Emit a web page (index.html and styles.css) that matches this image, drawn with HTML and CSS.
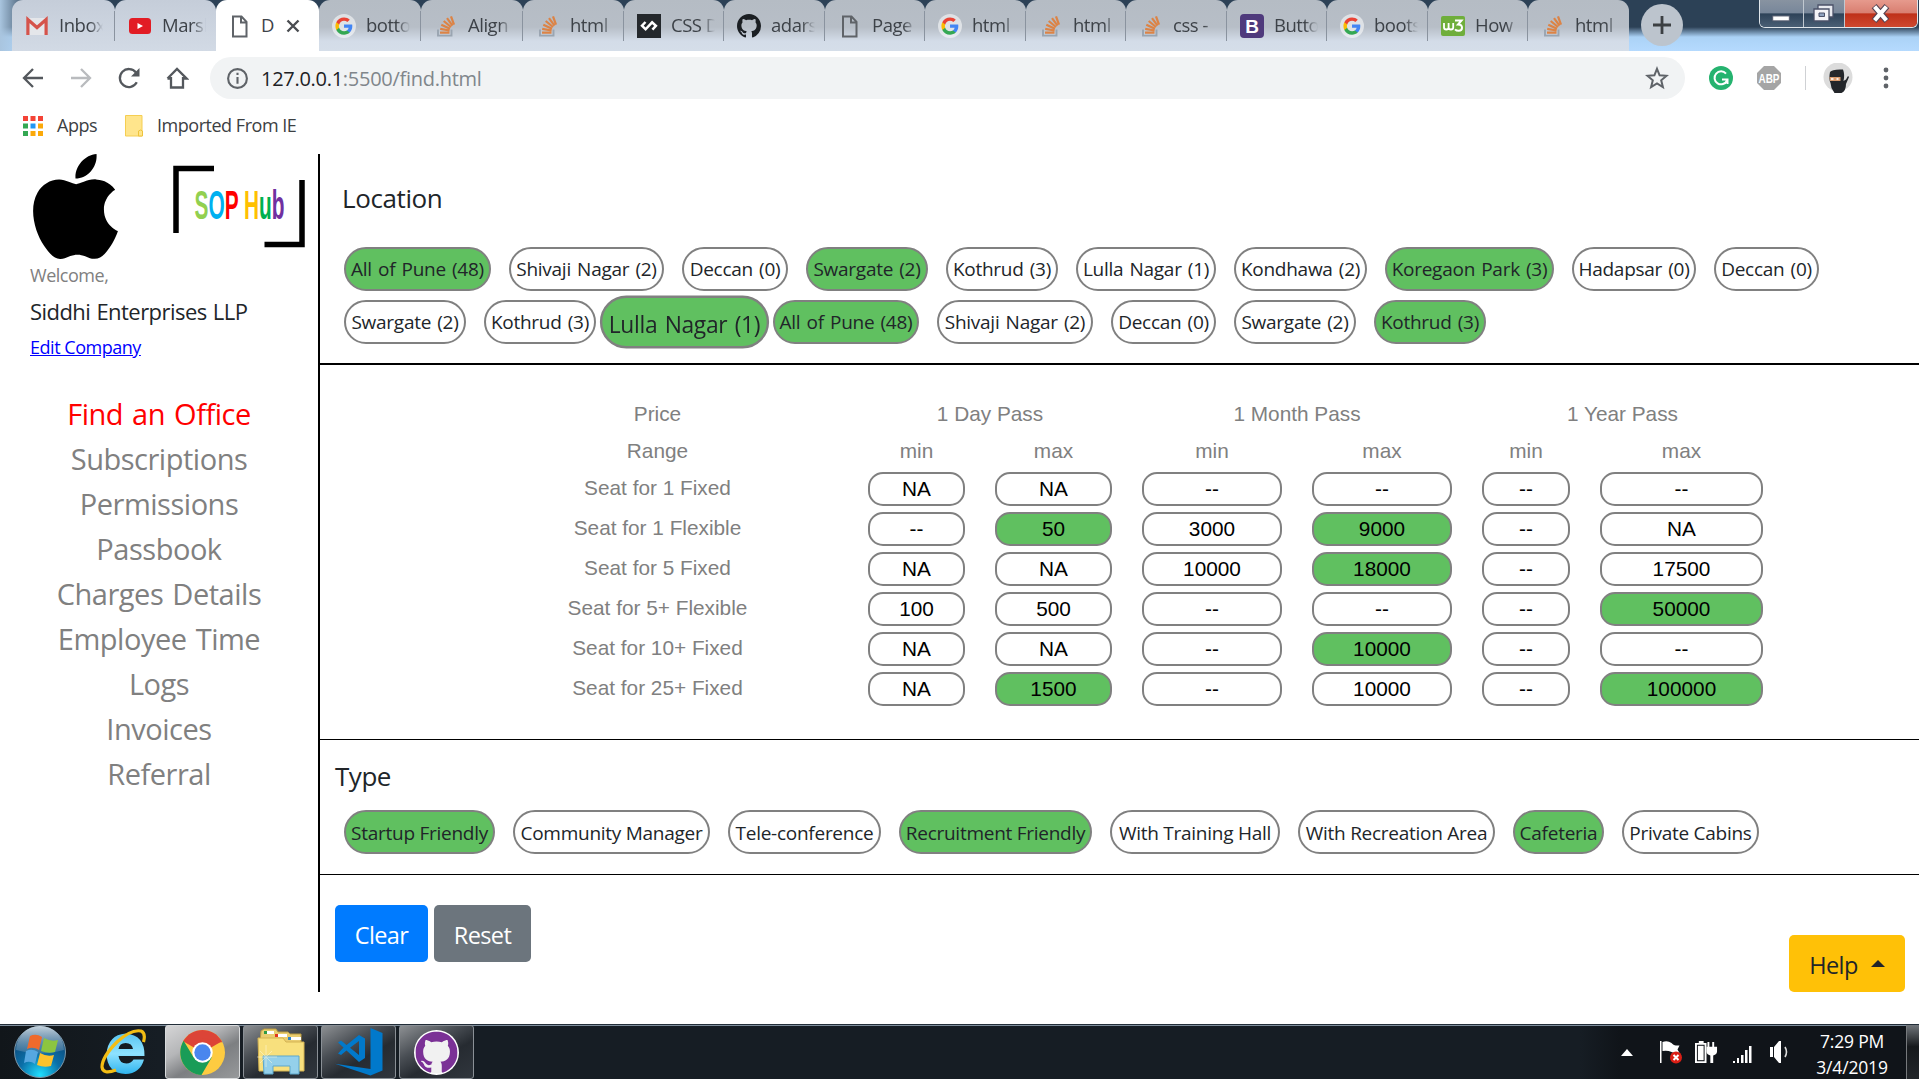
FILE: index.html
```html
<!DOCTYPE html>
<html lang="en">
<head>
<meta charset="utf-8">
<title>Document</title>
<link rel="stylesheet" href="styles.css">
</head>
<body>
<svg class="defs" aria-hidden="true">
  <symbol id="google" viewBox="0 0 24 24">
    <circle cx="12" cy="12" r="12" fill="#fff" opacity=".55"/>
    <g transform="translate(2.6 2.6) scale(.785)">
      <path fill="#4285f4" d="M22.56 12.25c0-.78-.07-1.53-.2-2.25H12v4.26h5.92c-.26 1.37-1.04 2.53-2.21 3.31v2.77h3.57c2.08-1.92 3.28-4.74 3.28-8.09z"/>
      <path fill="#34a853" d="M12 23c2.97 0 5.46-.98 7.28-2.66l-3.57-2.77c-.98.66-2.23 1.06-3.71 1.06-2.86 0-5.29-1.93-6.16-4.53H2.18v2.84C3.99 20.53 7.7 23 12 23z"/>
      <path fill="#fbbc05" d="M5.84 14.09c-.22-.66-.35-1.36-.35-2.09s.13-1.43.35-2.09V7.07H2.18C1.43 8.55 1 10.22 1 12s.43 3.45 1.18 4.93l3.66-2.84z"/>
      <path fill="#ea4335" d="M12 5.38c1.62 0 3.06.56 4.21 1.64l3.15-3.15C17.45 2.09 14.97 1 12 1 7.7 1 3.99 3.47 2.18 7.07l3.66 2.84c.87-2.6 3.3-4.53 6.16-4.53z"/>
    </g>
  </symbol>
  <symbol id="stack" viewBox="0 0 24 24">
    <path d="M4 15.500v6.100h13.500v-6.100" fill="none" stroke="#9aa5b1" stroke-width="1.900"/>
    <g stroke="#dc8345" stroke-width="2.200">
      <path d="M6 18.600h9.500M6.200 14.800l9.400 1.700M7.300 10.800l8.700 4M9.700 7l7.300 6M13 4.200l5.500 7.500M17 2.400l3 8.300"/>
    </g>
  </symbol>
  <symbol id="page" viewBox="0 0 24 24">
    <path d="M5 2.500h8.500l5 5.300v14.700H5zM13 3v5.500h5.500" fill="none" stroke="#5f6368" stroke-width="2"/>
  </symbol>
  <symbol id="octocat" viewBox="0 0 16 16">
    <path d="M8 0C3.58 0 0 3.58 0 8c0 3.54 2.29 6.53 5.47 7.59.4.07.55-.17.55-.38 0-.19-.01-.82-.01-1.49-2.01.37-2.53-.49-2.69-.94-.09-.23-.48-.94-.82-1.13-.28-.15-.68-.52-.01-.53.63-.01 1.08.58 1.23.82.72 1.21 1.87.87 2.33.66.07-.52.28-.87.51-1.07-1.78-.2-3.64-.89-3.64-3.95 0-.87.31-1.59.82-2.15-.08-.2-.36-1.02.08-2.12 0 0 .67-.21 2.2.82.64-.18 1.32-.27 2-.27.68 0 1.36.09 2 .27 1.53-1.04 2.2-.82 2.2-.82.44 1.1.16 1.92.08 2.12.51.56.82 1.27.82 2.15 0 3.07-1.87 3.75-3.65 3.95.29.25.54.73.54 1.48 0 1.07-.01 1.93-.01 2.2 0 .21.15.46.55.38A8.013 8.013 0 0016 8c0-4.42-3.58-8-8-8z"/>
  </symbol>
</svg>

<header class="tabs">
  <div class="tab light"><svg class="fav" viewBox="0 0 24 24"><path d="M2 4h20v17H2z" fill="#e4e6ea"/><path d="M2.900 21V5.500l9.100 8 9.100-8V21" fill="none" stroke="#d5534b" stroke-width="3.200"/></svg><span>Inbox</span></div>
  <div class="tab light flush"><svg class="fav" viewBox="0 0 24 24"><rect x="1" y="4" width="22" height="16" rx="3.500" fill="#e21c24"/><path d="M9.500 9v6l5.500-3z" fill="#fff"/></svg><span>Marsh</span></div>
  <div class="tab active"><svg class="fav"><use href="#page"/></svg><span>D</span><svg class="close" viewBox="0 0 14 14"><path d="M1.500 1.500l11 11M12.500 1.500l-11 11" stroke="#4a4d51" stroke-width="2.400"/></svg></div>
  <div class="tab"><svg class="fav"><use href="#google"/></svg><span>botto</span></div>
  <div class="tab"><svg class="fav"><use href="#stack"/></svg><span>Align</span></div>
  <div class="tab"><svg class="fav"><use href="#stack"/></svg><span>html</span></div>
  <div class="tab"><svg class="fav" viewBox="0 0 24 24"><path d="M0 0h24v24H0z" fill="#24282c"/><path d="M8.500 8L5 11.700l3.600 3.600 6.500-7 3.800 3.500-3.500 3.800" fill="none" stroke="#fff" stroke-width="2.500"/></svg><span>CSS D</span></div>
  <div class="tab"><svg class="fav" fill="#1b1f23"><use href="#octocat"/></svg><span>adars</span></div>
  <div class="tab"><svg class="fav"><use href="#page"/></svg><span>Page</span></div>
  <div class="tab"><svg class="fav"><use href="#google"/></svg><span>html</span></div>
  <div class="tab"><svg class="fav"><use href="#stack"/></svg><span>html</span></div>
  <div class="tab"><svg class="fav"><use href="#stack"/></svg><span>css -</span></div>
  <div class="tab"><svg class="fav" viewBox="0 0 24 24"><rect width="24" height="24" rx="4" fill="#4f3a7c"/><text x="12" y="19" text-anchor="middle" class="glyph" font-size="19" fill="#fff">B</text></svg><span>Butto</span></div>
  <div class="tab"><svg class="fav"><use href="#google"/></svg><span>boots</span></div>
  <div class="tab"><svg class="fav" viewBox="0 0 24 24"><rect y="2" width="24" height="20" rx="2" fill="#6fae3b"/><path d="M3 9v4.500q0 2 2.300 2t2.300-2V9v4.500q0 2 2.300 2t2.300-2V9" fill="none" stroke="#fff" stroke-width="1.800"/><path d="M14 6.500h6.500L17 10.500q4 0 4 3.300 0 3-3.200 3-2.500 0-3.800-1.500" fill="none" stroke="#fff" stroke-width="2"/></svg><span>How</span></div>
  <div class="tab flush"><svg class="fav"><use href="#stack"/></svg><span>html</span></div>
  <div class="newtab"><svg viewBox="0 0 42 42"><path d="M21 12v18M12 21h18" stroke="#3c4043" stroke-width="2.800"/></svg></div>
  <div class="winctl">
    <i><svg viewBox="0 0 44 28"><rect x="13" y="16" width="17" height="5" fill="#fff" stroke="#555b6e"/></svg></i>
    <i><svg viewBox="0 0 40 28"><path d="M14 5h15v12H14z" fill="#e8eaf0" stroke="#4b5168" stroke-width="1.300"/><path d="M10 9h15v12H10z" fill="#f4f4f8" stroke="#4b5168" stroke-width="1.300"/><path d="M15 13h5.500v3.500H15z" fill="#8fa2c0" stroke="#4b5168"/></svg></i>
    <i class="x"><svg viewBox="0 0 73 28"><path d="M29.500 6l13 15M42.500 6l-13 15" stroke="#564453" stroke-width="6.500"/><path d="M30 6.500l12 14M42 6.500l-12 14" stroke="#fff" stroke-width="4.200"/></svg></i>
  </div>
</header>

<div class="toolbar">
  <svg class="nav" viewBox="0 0 24 24"><path d="M22 12H3M12 3l-9 9 9 9" /></svg>
  <svg class="nav off" viewBox="0 0 24 24"><path d="M2 12h19M12 3l9 9-9 9"/></svg>
  <svg class="nav" viewBox="0 0 24 24"><path d="M19.800 16.300A9 9 0 1 1 19 6.500"/><path d="M22.500 2v8.500H14z" class="solid"/></svg>
  <svg class="nav" viewBox="0 0 24 24"><path d="M6 11v10.500h12V11M2.500 12.500L12 3l9.500 9.500H18M2.500 12.500H6"/></svg>
  <div class="omnibox">
    <svg class="info" viewBox="0 0 24 24"><circle cx="12" cy="12" r="9.800"/><path d="M12 10.500v7M12 6v2.400"/></svg>
    <span class="url">127.0.0.1<em>:5500/find.html</em></span>
    <svg class="star" viewBox="0 0 24 24"><path d="M12 2.800l2.600 6.500 7 .5-5.400 4.500 1.700 6.800-5.900-3.700-5.900 3.700 1.700-6.800-5.400-4.500 7-.5z"/></svg>
  </div>
  <svg class="ext" viewBox="0 0 24 24"><circle cx="12" cy="12" r="12" fill="#25b36f"/><path d="M17 7.600A6.500 6.500 0 1 0 18 14.500M13 13.500h5.500v4.500" fill="none" stroke="#fff" stroke-width="2"/></svg>
  <svg class="ext abp" viewBox="0 0 24 24"><path d="M7 0h10l7 7v10l-7 7H7l-7-7V7z" fill="#a5a5a5"/><text x="12" y="16.500" text-anchor="middle" class="glyph" font-size="12.500" fill="#fff" textLength="21" lengthAdjust="spacingAndGlyphs">ABP</text></svg>
  <i class="rule"></i>
  <svg class="avatar" viewBox="0 0 30 30"><circle cx="15" cy="14" r="14.500" fill="#dcdcdc"/><path d="M7 9q2-3 13-2.500 2 5 .5 11.500l2.500-1.500 2-3.500 1 1-3 7q0 7-4.500 9h-7l-3-5-1-5q-2-4-.5-11z" fill="#23262a"/><path d="M6.500 14h11v4H7z" fill="#d99b6e"/><path d="M8 16h2.500M13.500 16h2" stroke="#fff" stroke-width="1.500"/></svg>
  <svg class="dots" viewBox="0 0 6 24"><circle cx="3" cy="4" r="2.400"/><circle cx="3" cy="12" r="2.400"/><circle cx="3" cy="20" r="2.400"/></svg>
</div>

<div class="bookmarks">
  <svg class="apps" viewBox="0 0 20 20"><path fill="#f44336" d="M0 0h5v5H0zM7.500 0h5v5h-5zM15 0h5v5h-5z"/><path fill="#34a853" d="M0 7.500h5v5H0zM0 15h5v5H0z"/><path fill="#2196f3" d="M7.500 7.500h5v5h-5z"/><path fill="#fba90a" d="M15 7.500h5v5h-5zM15 15h5v5h-5zM7.500 15h5v5h-5z"/></svg>
  <span class="bm-apps">Apps</span>
  <svg class="folder" viewBox="0 0 18 22"><path d="M.5.500h16.500V21H.500z" fill="#ffe58c" stroke="#f5ce52"/><path d="M13.500 21v-5q2-2 4 0v5z" fill="#ffe58c" stroke="#eec33c"/></svg>
  <span class="bm-ie">Imported From IE</span>
</div>

<div class="app">
  <aside class="sidebar">
    <div class="logos">
      <svg class="apple" viewBox="2.200 0 19.600 24" preserveAspectRatio="none"><path d="M12.152 6.896c-.948 0-2.415-1.078-3.960-1.040-2.040.027-3.910 1.183-4.961 3.014-2.117 3.675-.546 9.103 1.519 12.090 1.013 1.454 2.208 3.090 3.792 3.039 1.520-.065 2.090-.987 3.935-.987 1.831 0 2.350.987 3.960.948 1.637-.026 2.676-1.480 3.676-2.948 1.156-1.688 1.636-3.325 1.662-3.415-.039-.013-3.182-1.221-3.220-4.857-.026-3.040 2.480-4.494 2.597-4.559-1.429-2.090-3.623-2.324-4.390-2.376-2-.156-3.675 1.090-4.610 1.090zM16.850 0C17.100 2.900 14.900 5.600 12 5.600 11.800 2.900 14.100.200 16.850 0z"/></svg>
      <svg class="sop" viewBox="0 0 132 83"><path d="M41 3.500H3v64.500M129 15v64.500H91.500" fill="none" stroke="#000" stroke-width="5.500"/>
        <text class="glyph" font-size="40" x="21.500" y="54" textLength="90" lengthAdjust="spacingAndGlyphs"><tspan fill="#92d050">S</tspan><tspan fill="#00b0f0">O</tspan><tspan fill="#f00">P</tspan> <tspan fill="#ffc000">H</tspan><tspan fill="#00b050">u</tspan><tspan fill="#7030a0">b</tspan></text></svg>
    </div>
    <div class="welcome">Welcome,</div>
    <div class="company">Siddhi Enterprises LLP</div>
    <a class="edit">Edit Company</a>
    <nav class="menu">
      <a class="current">Find an Office</a><a>Subscriptions</a><a>Permissions</a><a>Passbook</a><a>Charges Details</a><a>Employee Time</a><a>Logs</a><a>Invoices</a><a>Referral</a>
    </nav>
  </aside>
  <main class="main">
    <section class="location">
      <h2>Location</h2>
      <div class="pills loc-a"><span class="pill on">All of Pune (48)</span><span class="pill">Shivaji Nagar (2)</span><span class="pill">Deccan (0)</span><span class="pill on">Swargate (2)</span><span class="pill">Kothrud (3)</span><span class="pill">Lulla Nagar (1)</span><span class="pill">Kondhawa (2)</span><span class="pill on">Koregaon Park (3)</span><span class="pill">Hadapsar (0)</span><span class="pill">Deccan (0)</span></div>
      <div class="pills loc-b"><span class="pill">Swargate (2)</span><span class="pill">Kothrud (3)</span><span class="pill on hover">Lulla Nagar (1)</span><span class="pill on">All of Pune (48)</span><span class="pill">Shivaji Nagar (2)</span><span class="pill">Deccan (0)</span><span class="pill">Swargate (2)</span><span class="pill on">Kothrud (3)</span></div>
    </section>
    <section class="prices">
      <div class="grid">
        <b>Price</b><b class="two">1 Day Pass</b><b class="two">1 Month Pass</b><b class="two">1 Year Pass</b>
        <b>Range</b><b>min</b><b>max</b><b>min</b><b>max</b><b>min</b><b>max</b>
        <b class="seat">Seat for 1 Fixed</b><span>NA</span><span>NA</span><span>--</span><span>--</span><span>--</span><span>--</span>
        <b class="seat">Seat for 1 Flexible</b><span>--</span><span class="on">50</span><span>3000</span><span class="on">9000</span><span>--</span><span>NA</span>
        <b class="seat">Seat for 5 Fixed</b><span>NA</span><span>NA</span><span>10000</span><span class="on">18000</span><span>--</span><span>17500</span>
        <b class="seat">Seat for 5+ Flexible</b><span>100</span><span>500</span><span>--</span><span>--</span><span>--</span><span class="on">50000</span>
        <b class="seat">Seat for 10+ Fixed</b><span>NA</span><span>NA</span><span>--</span><span class="on">10000</span><span>--</span><span>--</span>
        <b class="seat">Seat for 25+ Fixed</b><span>NA</span><span class="on">1500</span><span>--</span><span>10000</span><span>--</span><span class="on">100000</span>
      </div>
    </section>
    <section class="types">
      <h2>Type</h2>
      <div class="pills type-row"><span class="pill on">Startup Friendly</span><span class="pill">Community Manager</span><span class="pill">Tele-conference</span><span class="pill on">Recruitment Friendly</span><span class="pill">With Training Hall</span><span class="pill">With Recreation Area</span><span class="pill on">Cafeteria</span><span class="pill">Private Cabins</span></div>
    </section>
    <section class="actions">
      <button class="btn clear">Clear</button><button class="btn reset">Reset</button>
      <button class="btn help">Help<i></i></button>
    </section>
  </main>
</div>

<footer class="taskbar">
  <div class="slot start"><svg viewBox="0 0 52 52"><defs><radialGradient id="orb" cx=".5" cy=".95" r=".9"><stop offset="0" stop-color="#1fe0ff"/><stop offset=".45" stop-color="#0b6fa8"/><stop offset="1" stop-color="#0d3f6c"/></radialGradient><linearGradient id="gloss" x2="0" y2="1"><stop offset="0" stop-color="#c6d4de"/><stop offset="1" stop-color="#5a86a8" stop-opacity=".5"/></linearGradient></defs><circle cx="26" cy="26" r="25.500" fill="url(#orb)" stroke="#7d97a8"/><path d="M2 24a24 24 0 0 1 48 0q-24 7-48 0z" fill="url(#gloss)"/><path d="M16 10q6-3 12 1l-3 13q-6-4-12-1z" fill="#ef6a2c"/><path d="M30 12q7 4 14 2l-3 12q-7 2-14-1z" fill="#8cc540"/><path d="M12 25q6-3 12 1l-3 12q-5-4-11-1z" fill="#56a7e0"/><path d="M26 27q7 4 14 2l-3 11q-7 2-14-1z" fill="#fdc22d"/></svg></div>
  <div class="slot ie"><svg viewBox="0 0 46 46"><defs><linearGradient id="ieg" x2="0" y2="1"><stop offset="0" stop-color="#5ac4f0"/><stop offset=".5" stop-color="#8ee2ff"/><stop offset="1" stop-color="#2fb4ee"/></linearGradient></defs><path d="M44.500 27H18.500q1 7.500 8 7.500 4.500 0 7-4H44q-4 14-18.500 14.500Q7 44 6.500 25 8 6 25.500 4.500 45 6 44.500 27zM18.500 20H33q-1-6-7.300-6T18.500 20z" fill="url(#ieg)"/><path d="M43.500 13Q46 4 41 2 31 0 17 13 2 28 2 38q1 8 14 3" fill="none" stroke="#f3bd14" stroke-width="3.200"/></svg></div>
  <div class="slot task chrome"><svg viewBox="0 0 44 44"><circle cx="22" cy="22" r="22" fill="#fdcb41"/><path d="M22 22L3 11A22 22 0 0 1 41 11z" fill="#dc4437"/><path d="M22 12H41L41 11 22 8z" fill="#dc4437"/><path d="M3.500 10.500A22 22 0 0 0 21 44L31 27 22 22 13.400 27z" fill="#199c57"/><circle cx="22" cy="22" r="10" fill="#fff"/><circle cx="22" cy="22" r="8" fill="#4a86ee"/></svg></div>
  <div class="slot task"><svg class="wide" viewBox="0 0 48 48"><path d="M4 3l3-2h12l2 3h10l2 2h11v9H3z" fill="#e9cd70" stroke="#b99b42"/><path d="M7 3h10v3H7zM20 6h10v3H20zM32 9h12v3H32z" fill="#fff"/><path d="M7 3h3v3H7z" fill="#2f9b45"/><path d="M18 6h3v3h-3z" fill="#e33420"/><path d="M31 9h3v3h-3z" fill="#2d85c8"/><path d="M1 10h25l3 4h18v29H2z" fill="#f8e07d" stroke="#d4b352"/><path d="M6 28h36v18h-9v-8H16v8H7z" fill="#94d0ea" stroke="#5ca7cb"/><path d="M9 17v22M-1 29h21M3 23l12 12M15 23L3 35" stroke="#fffbe0" stroke-width="1" opacity=".5"/></svg></div>
  <div class="slot task"><svg class="wide" viewBox="0 0 48 48"><path d="M35.500 0L47.500 5v37.500L35.500 47.500 0 35.700l35.500 5.300z" fill="#0179cb"/><path d="M30 10.500V30L24 34 11.500 22.500 6 27 3 25.500 8.500 19.500 3 14.500 6 12.500l5.500 4.500L24 7zM15 19.700l9 7.300V13z" fill="#0179cb" fill-rule="evenodd"/></svg></div>
  <div class="slot task"><svg viewBox="0 0 46 46"><circle cx="23" cy="23" r="23" fill="#fff"/><circle cx="23" cy="23" r="21.500" fill="#f1f1f1"/><g fill="#7b3196" transform="translate(1.500 1.500)"><use href="#octocat" width="43" height="43"/></g></svg></div>
  <div class="tray">
    <svg class="up" viewBox="0 0 12 7"><path d="M0 7l6-7 6 7z"/></svg>
    <svg class="flag" viewBox="0 0 24 24"><path d="M1 1h1.500v22H1z"/><path d="M3.500 2q5-2 9 1 2 3 8 2.500l-2 4 2 3.500q-4 1-8-1t-9-1z"/><circle cx="17" cy="17.500" r="6" fill="#da1f16"/><path d="M14.500 15l5 5M19.500 15l-5 5" stroke="#fff" stroke-width="2"/></svg>
    <svg class="batt" viewBox="0 0 24 24"><path d="M4 0h5v2h3v21H0V2h4zM2 4v17h8V4z" fill-rule="evenodd"/><path d="M3 5h6v15H3z"/><path d="M13 1h2v5h3V1h2v5h3v5q0 3-4 4v8h-3v-8q-4-1-4-4V6h1z"/></svg>
    <svg class="sig" viewBox="0 0 20 17"><path d="M0 15h2v2H0zM4 12h2v5H4zM8 9h2.500v8H8zM12 4h2.500v13H12zM16 0h2.500v17H16z"/></svg>
    <svg class="vol" viewBox="0 0 20 22"><path d="M0 6h3v10H0zM4 6l5-6h2v22H9l-5-6z"/><path d="M15 6q3 5 0 10" fill="none" stroke="#ddd" stroke-width="1.600"/></svg>
    <div class="clock"><span>7:29 PM</span><span>3/4/2019</span></div>
    <i class="desk"></i>
  </div>
</footer>
</body>
</html>
```
FILE: styles.css
```css
* { box-sizing: border-box; }
body {
  margin: 0;
  width: 1919px;
  height: 1079px;
  overflow: hidden;
  display: flex;
  flex-direction: column;
  background: #fff;
  color: #212529;
  font-family: "Open Sans", "Noto Sans", sans-serif;
  font-size: 19px;
  letter-spacing: -0.025em;
}
svg { display: block; flex: none; }
.defs { display: none; }
.glyph { font-family: "Liberation Sans", sans-serif; font-weight: bold; letter-spacing: 0; }

/* tab strip */
.tabs {
  height: 51px;
  padding-left: 12px;
  display: grid;
  grid-template-columns: 103px 101px 103px 102px 102px 101px 100px 101px 100px 101px 100px 101px 100px 101px 100px 101px 66px 1fr;
  background: linear-gradient(90deg, #a9c5df 0, #a9c5df00 30px), linear-gradient(#2c4156 0, #2c4156 27px, #abd2f6 37px, #b5dafe 51px);
}
.tab {
  display: flex;
  align-items: center;
  padding-left: 13px;
  gap: 10px;
  position: relative;
  border-radius: 11px 11px 0 0;
  background: linear-gradient(#b5bcc4 0, #b7bec7 27px, #d3dce8 41px, #d5dee9);
  color: #3d4248;
}
.tab::after {
  content: "";
  position: absolute;
  right: 0;
  top: 11px;
  height: 30px;
  width: 1px;
  background: #8a939f;
}
.tab.light { background: linear-gradient(#c5cdd9, #d2dae5); }
.tab.flush::after, .tab.active::after { display: none; }
.tab.active { background: #fff; border-radius: 11px 11px 0 0; padding-left: 12px; }
.tab span {
  width: 44px;
  overflow: hidden;
  white-space: nowrap;
  line-height: 30px;
  padding-bottom: 2px;
  font-size: 18.5px;
  -webkit-mask-image: linear-gradient(90deg, #000 70%, transparent);
  mask-image: linear-gradient(90deg, #000 70%, transparent);
}
.tab.active span { width: 15px; -webkit-mask-image: none; mask-image: none; margin-left: -1px; }
.fav { width: 24px; height: 24px; }
.close { width: 14px; height: 14px; }
.newtab { padding: 4px 0 0 12px; }
.newtab svg { width: 42px; height: 42px; border-radius: 50%; background: #bcc4cd; }
.winctl {
  justify-self: end;
  width: 159px;
  height: 28px;
  margin-right: 1px;
  display: grid;
  grid-template-columns: 44px 41px 1fr;
  border: 1px solid #dfe5ea;
  border-top: 0;
  border-radius: 0 0 6px 6px;
  overflow: hidden;
}
.winctl i { border-right: 1px solid #c0c8d0; background: linear-gradient(#8893a1 0, #78879a 45%, #2e4359 50%, #4c6177); }
.winctl .x { border: 0; background: linear-gradient(#e69a8d 0, #d97f71 45%, #bf3019 50%, #d04a30); }
.winctl svg { width: 100%; height: 28px; }

/* toolbar */
.toolbar { height: 54px; display: flex; align-items: center; padding-left: 21px; }
.nav { width: 24px; height: 24px; margin-right: 24px; fill: none; stroke: #54585d; stroke-width: 2.3; }
.nav.off { stroke: #b9bbbe; }
.nav .solid { fill: #54585d; stroke: none; }
.omnibox {
  width: 1475px;
  height: 42px;
  margin-left: -3px;
  padding: 0 16px;
  display: flex;
  align-items: center;
  border-radius: 21px;
  background: #f1f3f4;
}
.info { width: 23px; height: 23px; fill: none; stroke: #5f6368; stroke-width: 2.2; }
.url { margin-left: 12px; flex: 1; font-size: 20px; letter-spacing: -0.014em; color: #202124; }
.url em { font-style: normal; color: #80868b; }
.star { width: 24px; height: 24px; fill: none; stroke: #5f6368; stroke-width: 2; }
.ext { width: 24px; height: 24px; margin-left: 24px; }
.rule { width: 1px; height: 24px; background: #cfd1d4; margin: 0 17px 0 24px; }
.avatar { width: 30px; height: 30px; }
.dots { width: 6px; height: 24px; margin-left: 30px; fill: #5f6368; }
.bookmarks { height: 49px; display: flex; align-items: center; padding: 0 0 7px 23px; font-size: 18px; color: #3c4043; }
.bookmarks span { padding-bottom: 2px; }
.apps { width: 20px; height: 20px; }
.bm-apps { width: 68px; padding-left: 14px; margin-right: 14px; }
.folder { width: 18px; height: 22px; }
.bm-ie { margin-left: 14px; }

/* page */
.app { display: flex; height: 838px; }
.sidebar { width: 320px; border-right: 2px solid #000; }
.logos { display: flex; height: 105px; padding-left: 33px; gap: 55px; }
.apple { width: 85px; height: 105px; }
.sop { width: 132px; height: 83px; margin-top: 11px; }
.welcome, .company, .edit { display: block; padding-left: 30px; white-space: nowrap; }
.welcome { color: #808080; line-height: 32px; font-size: 18px; }
.company { font-size: 22px; line-height: 40px; letter-spacing: -0.025em; word-spacing: 1px; }
.edit { font-size: 18px; line-height: 32px; color: #00f; text-decoration: underline; }
.menu { margin-top: 28px; display: flex; flex-direction: column; text-align: center; font-size: 29px; line-height: 45px; word-spacing: 2px; color: #808080; }
.menu .current { color: #f00; }
.main { flex: 1; }
h2 { margin: 0; font-weight: 400; font-size: 26px; line-height: 32px; }
.location { height: 211px; padding: 28px 0 0 24px; border-bottom: 2px solid #000; }
.location h2 { margin: 0 0 33px -2px; letter-spacing: -0.015em; }
.pills { display: grid; column-gap: 18px; }
.loc-a { grid-template-columns: 147px 155px 106px 122px 112px 140px 133px 169px 124px 105px; margin-bottom: 9px; }
.loc-b { grid-template-columns: 122px 112px 141px 146px 156px 105px 122px 112px; }
.type-row { grid-template-columns: 151px 197px 153px 193px 170px 197px 91px 137px; padding-left: 9px; }
.pill {
  height: 44px;
  border: 2px solid #808080;
  border-radius: 22px;
  display: flex;
  align-items: center;
  justify-content: center;
  white-space: nowrap;
  letter-spacing: -0.014em;
  background: #fff;
}
.location .pill { word-spacing: 1.5px; }
.types .pill { padding-top: 1px; }
.pill.on, .grid .on { background: #60c060; }
.pill.hover { transform: scale(1.2); padding-top: 3px; }
.prices { height: 375px; padding: 30px 0 0 157px; border-bottom: 1px solid #000; }
.grid {
  display: grid;
  grid-template-columns: 361px 97px 117px 140px 140px 88px 163px;
  grid-template-rows: 38px 36px repeat(6, 40px);
  column-gap: 30px;
  align-items: center;
  text-align: center;
  font-family: "Liberation Sans", Arial, sans-serif;
  font-size: 20.8px;
  letter-spacing: 0;
}
.grid b { font-weight: 400; color: #808080; }
.grid .two { grid-column: span 2; }
.grid .seat { padding-bottom: 2px; }
.grid span { height: 34px; line-height: 29px; border: 2px solid #808080; border-radius: 15px; color: #000; }
.types { height: 135px; padding: 20px 0 0 15px; border-bottom: 1px solid #000; }
.types h2 { margin-bottom: 18px; }
.actions { display: flex; gap: 6px; padding: 30px 14px 0 15px; }
.btn {
  height: 57px;
  border: 0;
  border-radius: 5px;
  padding: 2px 0 0;
  color: #fff;
  font: 400 23.5px "Open Sans", "Noto Sans", sans-serif;
  letter-spacing: -0.025em;
}
.clear { width: 93px; background: #007bff; }
.reset { width: 97px; background: #6c757d; }
.help { width: 116px; margin: 30px 0 0 auto; background: #ffc107; color: #212529; display: flex; align-items: center; justify-content: center; gap: 13px; }
.help i { border: 7px solid transparent; border-top: 0; border-bottom-color: #212529; margin-top: -3px; }

/* taskbar */
.taskbar { margin-top: auto; height: 55px; padding-left: 14px; display: flex; background: linear-gradient(90deg, #11161a 0, #161d24 160px, #161d24 1580px, #101419 1620px); border-top: 1px solid #222d38; box-shadow: inset 0 1px #7e8d9b; }
.slot { display: flex; align-items: center; justify-content: center; }
.start svg { width: 52px; height: 52px; }
.ie { padding: 0 19px 0 34px; }
.ie svg { width: 46px; height: 46px; }
.task { width: 75px; margin-right: 3px; border: 1px solid #8a9096; border-radius: 3px; background: linear-gradient(150deg, #8d9093 0, #4a4f55 35%, #262b31 60%, #30363d); }
.task svg { width: 45px; height: 45px; }
.task .wide { width: 48px; height: 48px; }
.task.chrome { border-color: #d8dadc; background: linear-gradient(150deg, #d5d5d6 0, #b5b6b8 35%, #7d7f82 60%, #97999b); }
.tray { margin-left: auto; display: flex; align-items: center; fill: #fff; color: #fff; }
.up { width: 12px; height: 7px; margin-right: 26px; }
.flag { width: 24px; height: 24px; margin-right: 12px; }
.batt { width: 23px; height: 25px; margin-right: 15px; }
.sig { width: 20px; height: 17px; margin: 4px 17px 0 0; }
.vol { width: 20px; height: 22px; margin-right: 24px; }
.clock { width: 76px; display: flex; flex-direction: column; text-align: center; font-size: 17.5px; line-height: 26px; letter-spacing: -0.01em; padding-top: 3px; margin-right: 16px; }
.desk { width: 13px; height: 54px; border-left: 1px solid #76797c; background: linear-gradient(#70757a, #16191c 40%, #22262a); }
```
